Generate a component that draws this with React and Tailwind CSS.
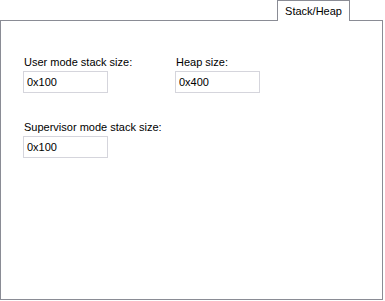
import React from 'react'

const Field = ({ label, value }) => (
  <div className="flex flex-col">
    <label className="h-[14px] leading-[14px] mb-[2px] pl-px whitespace-nowrap">{label}</label>
    <input
      type="text"
      defaultValue={value}
      className="w-[85px] h-[22px] border border-[#d5d5dc] px-[3px] bg-white outline-none text-[11px] text-black"
    />
  </div>
)

const App = () => {
  return (
    <div className="w-[385px] h-[301px] bg-white text-[11px] text-black" style={{ fontFamily: '"Liberation Sans", Arial, sans-serif' }}>
      <div className="w-[383px] flex flex-col">
        <div className="flex justify-end pr-[33px]">
          <div className="relative z-10 -mb-px w-[73px] h-[21px] border border-b-0 border-[#8a8c95] bg-white flex items-start justify-center pt-[3px] leading-[14px]">
            Stack/Heap
          </div>
        </div>
        <div className="h-[280px] border border-[#8a8c95] bg-white pt-[34px] pl-[22px]">
          <div className="grid grid-cols-[85px_85px] gap-x-[67px] gap-y-[27px]">
            <Field label="User mode stack size:" value="0x100" />
            <Field label="Heap size:" value="0x400" />
            <Field label="Supervisor mode stack size:" value="0x100" />
          </div>
        </div>
      </div>
    </div>
  )
}

export default App
